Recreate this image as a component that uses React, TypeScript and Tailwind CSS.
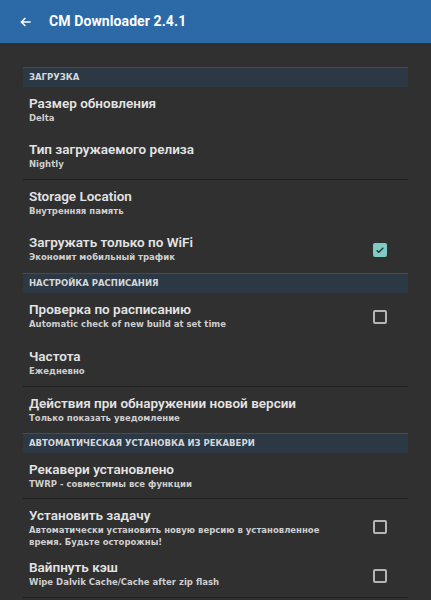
import React from "react";

type Row = {
  title: string;
  sub: React.ReactNode;
  check?: "on" | "off";
  divider?: boolean;
  h: string;
  cb?: string;
};

const SUB = { fontFamily: "'DejaVu Sans', Verdana, sans-serif" };

function Section({ label }: { label: string }) {
  return (
    <div
      className="h-[20px] flex items-center px-[6px] bg-[#2c3944] border-t border-[#414d57] text-[8.5px] font-bold text-[#d4d8dc] leading-none"
      style={SUB}
    >
      {label}
    </div>
  );
}

function CheckBox({ on }: { on: boolean }) {
  if (on) {
    return (
      <div className="w-[14px] h-[14px] rounded-[2px] bg-[#80cbc4] flex items-center justify-center">
        <svg width="10" height="10" viewBox="0 0 24 24">
          <path d="M4 12.5l5 5L20 6.5" fill="none" stroke="#26302e" strokeWidth="3" />
        </svg>
      </div>
    );
  }
  return <div className="w-[14px] h-[14px] rounded-[2px] border-2 border-[#b5b5b5]" />;
}

function Item({ r }: { r: Row }) {
  return (
    <div className={`flex items-start pl-[6px] pr-[21px] pt-[8px] ${r.h} ${r.divider ? "border-b border-[#1f1f1f]" : ""}`}>
      <div className="flex-1 min-w-0">
        <div className="text-[13.5px] leading-[16px] font-semibold text-[#e3e3e3]">{r.title}</div>
        <div className="text-[8.5px] leading-[12px] font-bold text-[#cecece] mt-[1px]" style={SUB}>
          {r.sub}
        </div>
      </div>
      {r.check && (
        <div className={r.cb ?? "pt-[9px]"}>
          <CheckBox on={r.check === "on"} />
        </div>
      )}
    </div>
  );
}

export default function App() {
  const s1: Row[] = [
    { title: "Размер обновления", sub: "Delta", h: "h-[46px]" },
    { title: "Тип загружаемого релиза", sub: "Nightly", divider: true, h: "h-[47px]" },
    { title: "Storage Location", sub: "Внутренняя память", h: "h-[46px]" },
    { title: "Загружать только по WiFi", sub: "Экономит мобильный трафик", check: "on", h: "h-[47px]" },
  ];
  const s2: Row[] = [
    { title: "Проверка по расписанию", sub: "Automatic check of new build at set time", check: "off", h: "h-[47px]" },
    { title: "Частота", sub: "Ежедневно", divider: true, h: "h-[47px]" },
    { title: "Действия при обнаружении новой версии", sub: "Только показать уведомление", h: "h-[46px]" },
  ];
  const s3: Row[] = [
    { title: "Рекавери установлено", sub: "TWRP - совместимы все функции", divider: true, h: "h-[46px]" },
    {
      title: "Установить задачу",
      sub: (
        <>
          Автоматически установить новую версию в установленное
          <br />
          время. Будьте осторожны!
        </>
      ),
      check: "off",
      h: "h-[52px]",
      cb: "pt-[13px]",
    },
    { title: "Вайпнуть кэш", sub: "Wipe Dalvik Cache/Cache after zip flash", check: "off", divider: true, h: "h-[47px]", cb: "pt-[10px]" },
  ];
  return (
    <div
      className="w-[431px] h-[600px] overflow-hidden bg-[#303030]"
      style={{ fontFamily: "Roboto, 'Liberation Sans', Arial, sans-serif" }}
    >
      <div className="h-[43px] bg-[#2b6aa6] flex items-center">
        <svg className="ml-[19px]" width="14" height="14" viewBox="0 0 24 24">
          <path d="M20 12H5M11 5l-7 7 7 7" fill="none" stroke="#ffffff" strokeWidth="2.6" />
        </svg>
        <div className="ml-[16px] text-[14px] font-bold text-white tracking-[0.1px]">CM Downloader 2.4.1</div>
      </div>
      <div className="mx-[23px] mt-[24px]">
        <Section label="ЗАГРУЗКА" />
        {s1.map((r) => (
          <Item key={r.title} r={r} />
        ))}
        <Section label="НАСТРОЙКА РАСПИСАНИЯ" />
        {s2.map((r) => (
          <Item key={r.title} r={r} />
        ))}
        <Section label="АВТОМАТИЧЕСКАЯ УСТАНОВКА ИЗ РЕКАВЕРИ" />
        {s3.map((r) => (
          <Item key={r.title} r={r} />
        ))}
      </div>
    </div>
  );
}
